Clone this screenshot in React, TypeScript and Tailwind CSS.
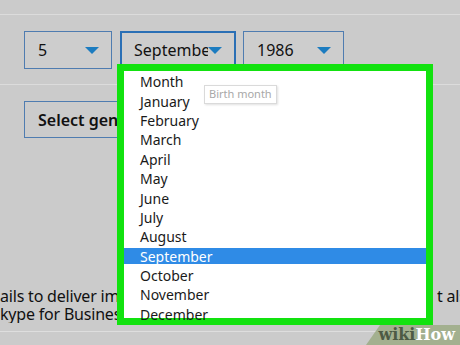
import React from "react";

const months = [
  "Month",
  "January",
  "February",
  "March",
  "April",
  "May",
  "June",
  "July",
  "August",
  "September",
  "October",
  "November",
  "December",
];

function Caret() {
  return (
    <svg width="14" height="7" viewBox="0 0 14 7" className="shrink-0">
      <path d="M0 0 L14 0 L7 7 Z" fill="#1c7cc0" />
    </svg>
  );
}

function SelectBox({ label, width, active }: { label: string; width: string; active?: boolean }) {
  return (
    <div
      className={`${width} h-[38px] flex items-center justify-between pr-[12px] bg-[#cdcdcd] ${
        active ? "border-2 border-[#2a6fb5] pl-[12px]" : "border border-[#4f7cb0] pl-[13px]"
      }`}
    >
      <span className="text-[16px] text-[#111] whitespace-nowrap overflow-hidden">{label}</span>
      <Caret />
    </div>
  );
}

export default function App() {
  return (
    <div
      className="relative w-[460px] h-[345px] overflow-hidden bg-[#cbcbcb] text-[#111]"
      style={{ fontFamily: '"Noto Sans", "Open Sans", sans-serif' }}
    >
      <div className="h-[15px] border-b border-[#dcdcdc]" />

      <div className="flex pl-[24px] mt-[16px]">
        <SelectBox label="5" width="w-[88px]" />
        <div className="ml-[8px]">
          <SelectBox label="Septembe" width="w-[116px]" active />
        </div>
        <div className="ml-[7px]">
          <SelectBox label="1986" width="w-[101px]" />
        </div>
      </div>

      <div className="mt-[15px] border-b border-[#dcdcdc]" />

      <div className="ml-[24px] mt-[16px] w-[100px] h-[37px] border border-r-0 border-[#4f7cb0] flex items-center pl-[13px] overflow-hidden">
        <span className="w-[80px] overflow-hidden text-[16px] font-semibold whitespace-nowrap">Select gender</span>
      </div>

      <div className="mt-[149px] text-[16px] leading-[18px] tracking-[-0.2px]">
        <div className="flex">
          <span className="w-[117px] overflow-hidden whitespace-nowrap">ails to deliver important</span>
          <span className="ml-auto w-[23px] overflow-hidden whitespace-nowrap">t also</span>
        </div>
        <div className="w-[117px] overflow-hidden whitespace-nowrap">kype for Business</div>
      </div>

      <div className="mt-[8px] border-b border-[#dedede]" />

      {/* open month list */}
      <div className="absolute left-[117px] top-[64px] w-[316px] h-[261px] border-[7px] border-[#12e20f] bg-white">
        <div className="pt-[1px]">
          {months.map((m) => (
            <div key={m} className="h-[19.4px] flex items-center">
              <div
                className={`w-full h-[16px] flex items-center pl-[16px] text-[14px] ${
                  m === "September" ? "bg-[#2f8be6] text-white" : "text-[#1a1a1a]"
                }`}
              >
                {m}
              </div>
            </div>
          ))}
        </div>
      </div>

      {/* tooltip */}
      <div className="absolute left-[204px] top-[85px] h-[19px] px-[4px] flex items-center bg-white border border-[#dadada] shadow-[1px_1px_2px_rgba(0,0,0,0.12)] text-[11px] text-[#a8a8a8]">
        Birth month
      </div>

      {/* watermark */}
      <div className="absolute right-0 bottom-0 w-[94px] h-[20px] bg-[#a3b08f] [clip-path:polygon(14px_0,100%_0,100%_100%,0_100%)] flex items-center justify-end pr-[5px]">
        <span
          className="text-[16px] font-bold leading-none"
          style={{ fontFamily: '"DejaVu Serif", "Liberation Serif", serif' }}
        >
          <span className="text-[#4d5a44]">wiki</span>
          <span className="text-white">How</span>
        </span>
      </div>
    </div>
  );
}
